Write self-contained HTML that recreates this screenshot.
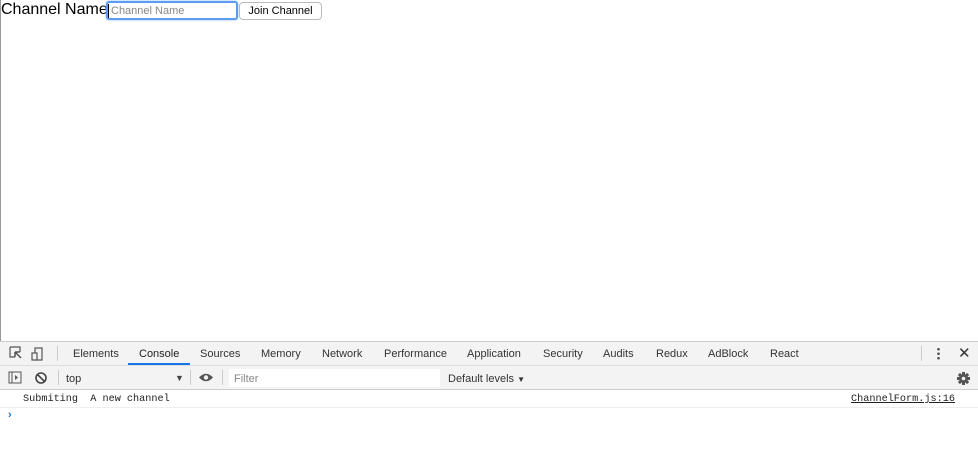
<!DOCTYPE html>
<html><head><style>
*{margin:0;padding:0;box-sizing:border-box}
body{width:978px;height:469px;overflow:hidden;background:#fff;font-family:"Liberation Sans",sans-serif;position:relative}
.a{position:absolute;white-space:nowrap}
.tab{position:absolute;top:347px;font-size:11px;color:#333}
</style></head><body>
<div class="a" style="left:0;top:0;width:1px;height:341px;background:#999"></div>
<div class="a" style="left:1px;top:0;font-size:16px;color:#000;line-height:20px">Channel Name</div>
<div class="a" style="left:106px;top:1px;width:132px;height:19px;border:2px solid #5b9bf0;border-radius:3px;box-shadow:0 0 2px #8ab8f5"></div>
<div class="a" style="left:108px;top:4px;width:1px;height:14px;background:#000"></div>
<div class="a" style="left:111px;top:5px;font-size:11px;color:#888">Channel Name</div>
<div class="a" style="left:239px;top:2px;width:83px;height:18px;border:1px solid #bbb;border-radius:4px;background:#fff;font-size:11px;text-align:center;line-height:17px;color:#000">Join Channel</div>

<div class="a" style="left:0;top:341px;width:978px;height:1px;background:#ccc"></div>
<div class="a" style="left:0;top:342px;width:978px;height:24px;background:#f3f3f3"></div>
<div class="a" style="left:0;top:365px;width:978px;height:1px;background:#ddd"></div>
<svg class="a" style="left:9px;top:346px" width="40" height="16" viewBox="0 0 40 16"><path d="M1 1h10v5M1 1v10h5" fill="none" stroke="#555" stroke-width="1.2"/><path d="M6 6l6 6M6 6v5M6 6h5" stroke="#555" stroke-width="1.5" fill="none"/><rect x="26" y="2" width="7" height="12" fill="none" stroke="#555" stroke-width="1.2"/><rect x="23" y="7" width="5" height="7" fill="#f3f3f3" stroke="#555" stroke-width="1.2"/></svg>
<div class="a" style="left:57px;top:346px;width:1px;height:15px;background:#ccc"></div>
<div class="tab" style="left:73px;top:348px">Elements</div>
<div class="tab" style="left:139px;top:348px;color:#222">Console</div>
<div class="a" style="left:128px;top:363px;width:62px;height:2px;background:#1a73e8"></div>
<div class="tab" style="left:200px;top:348px">Sources</div>
<div class="tab" style="left:261px;top:348px">Memory</div>
<div class="tab" style="left:322px;top:348px">Network</div>
<div class="tab" style="left:384px;top:348px">Performance</div>
<div class="tab" style="left:467px;top:348px">Application</div>
<div class="tab" style="left:543px;top:348px">Security</div>
<div class="tab" style="left:603px;top:348px">Audits</div>
<div class="tab" style="left:656px;top:348px">Redux</div>
<div class="tab" style="left:708px;top:348px">AdBlock</div>
<div class="tab" style="left:770px;top:348px">React</div>
<div class="a" style="left:921px;top:346px;width:1px;height:15px;background:#ccc"></div>
<div class="a" style="left:937px;top:347px;width:3px;height:13px;background:radial-gradient(circle,#555 1.2px,transparent 1.5px) 0 0/3px 4.5px"></div>
<div class="a" style="left:958px;top:344px;font-size:15px;color:#333">✕</div>

<div class="a" style="left:0;top:366px;width:978px;height:23px;background:#f3f3f3"></div>
<div class="a" style="left:0;top:389px;width:978px;height:1px;background:#ccc"></div>
<svg class="a" style="left:8px;top:371px" width="40" height="14" viewBox="0 0 40 14"><rect x="1" y="1" width="12" height="11" fill="none" stroke="#555"/><line x1="4" y1="1" x2="4" y2="12" stroke="#555"/><path d="M7 4l3 2.5L7 9z" fill="#555"/><circle cx="33" cy="7" r="5" fill="none" stroke="#444" stroke-width="1.6"/><line x1="29.5" y1="3.5" x2="36.5" y2="10.5" stroke="#444" stroke-width="1.6"/></svg>
<div class="a" style="left:58px;top:370px;width:1px;height:15px;background:#ccc"></div>
<div class="a" style="left:66px;top:373px;font-size:11px;color:#333">top</div>
<div class="a" style="left:175px;top:373px;font-size:9px;color:#444">▼</div>
<div class="a" style="left:190px;top:370px;width:1px;height:15px;background:#ccc"></div>
<svg class="a" style="left:198px;top:372px" width="16" height="11" viewBox="0 0 16 11"><path d="M1 5.5Q8-2 15 5.5Q8 13 1 5.5z" fill="#555"/><circle cx="8" cy="5.5" r="2.2" fill="#f3f3f3"/></svg>
<div class="a" style="left:222px;top:370px;width:1px;height:15px;background:#ccc"></div>
<div class="a" style="left:229px;top:369px;width:211px;height:18px;background:#fff"></div>
<div class="a" style="left:234px;top:373px;font-size:11px;color:#888">Filter</div>
<div class="a" style="left:448px;top:373px;font-size:11px;color:#333">Default levels <span style="font-size:8px">▼</span></div>
<svg class="a" style="left:957px;top:372px" width="13" height="13" viewBox="0 0 13 13"><g fill="#555"><circle cx="6.5" cy="6.5" r="4.5"/><rect x="5" y="0" width="3" height="13"/><rect x="0" y="5" width="13" height="3"/><rect x="5" y="0" width="3" height="13" transform="rotate(45 6.5 6.5)"/><rect x="5" y="0" width="3" height="13" transform="rotate(-45 6.5 6.5)"/></g><circle cx="6.5" cy="6.5" r="1.8" fill="#f3f3f3"/></svg>

<div class="a" style="left:23px;top:394px;font-family:'Liberation Mono',monospace;font-size:10.2px;color:#222">Submiting&nbsp;&nbsp;A new channel</div>
<div class="a" style="left:851px;top:394px;font-family:'Liberation Mono',monospace;font-size:10.2px;color:#222;text-decoration:underline">ChannelForm.js:16</div>
<div class="a" style="left:0;top:407px;width:978px;height:1px;background:#eee"></div>
<div class="a" style="left:8px;top:409px;font-size:11px;color:#1a73e8;font-weight:bold">›</div>
</body></html>
